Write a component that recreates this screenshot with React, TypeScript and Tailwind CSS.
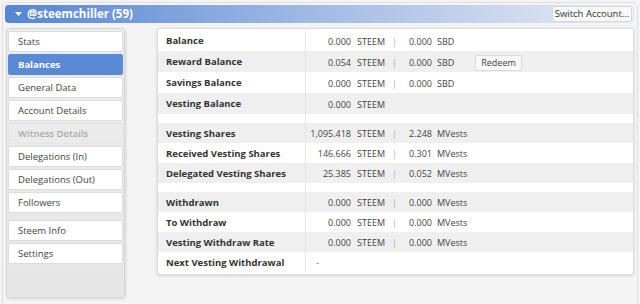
const menu = [
  { label: "Stats" },
  { label: "Balances", active: true },
  { label: "General Data" },
  { label: "Account Details" },
  { label: "Witness Details", disabled: true },
  { label: "Delegations (In)" },
  { label: "Delegations (Out)" },
  { label: "Followers", gapAfter: true },
  { label: "Steem Info" },
  { label: "Settings" },
];

type Row = {
  label: string;
  a?: string;
  au?: string;
  b?: string;
  bu?: string;
  redeem?: boolean;
  dash?: boolean;
};

const groups: { h: string; rows: Row[] }[] = [
  {
    h: "h-[21px]",
    rows: [
      { label: "Balance", a: "0.000", au: "STEEM", b: "0.000", bu: "SBD" },
      { label: "Reward Balance", a: "0.054", au: "STEEM", b: "0.000", bu: "SBD", redeem: true },
      { label: "Savings Balance", a: "0.000", au: "STEEM", b: "0.000", bu: "SBD" },
      { label: "Vesting Balance", a: "0.000", au: "STEEM" },
    ],
  },
  {
    h: "h-[20px]",
    rows: [
      { label: "Vesting Shares", a: "1,095.418", au: "STEEM", b: "2.248", bu: "MVests" },
      { label: "Received Vesting Shares", a: "146.666", au: "STEEM", b: "0.301", bu: "MVests" },
      { label: "Delegated Vesting Shares", a: "25.385", au: "STEEM", b: "0.052", bu: "MVests" },
    ],
  },
  {
    h: "h-[20px]",
    rows: [
      { label: "Withdrawn", a: "0.000", au: "STEEM", b: "0.000", bu: "MVests" },
      { label: "To Withdraw", a: "0.000", au: "STEEM", b: "0.000", bu: "MVests" },
      { label: "Vesting Withdraw Rate", a: "0.000", au: "STEEM", b: "0.000", bu: "MVests" },
      { label: "Next Vesting Withdrawal", dash: true },
    ],
  },
];

function BalanceRow({ row, shaded, h }: { row: Row; shaded: boolean; h: string }) {
  return (
    <div className={`flex ${h} items-center ${shaded ? "bg-[#efefef]" : "bg-white"}`}>
      <div className="flex h-full w-[148px] items-center border-r border-[#e6e6e6] pl-[8px] pt-[2px] text-[9.5px] font-bold text-[#333]">
        {row.label}
      </div>
      {row.dash ? (
        <div className="pl-[10px] pt-[2px] text-[#666]">-</div>
      ) : (
        <div className="flex items-center pt-[2px] text-[#444]">
          <span className="w-[45px] text-right">{row.a}</span>
          <span className="w-[36px] pl-[6px]">{row.au}</span>
          {row.b && (
            <>
              <span className="w-[14px] pl-[5px] text-[#aaa]">|</span>
              <span className="w-[31px] text-right">{row.b}</span>
              <span className="w-[38px] pl-[5px]">{row.bu}</span>
            </>
          )}
          {row.redeem && (
            <button
              type="button"
              className="ml-[5px] h-[16px] w-[47px] rounded-[2px] border border-[#dadada] bg-[#f8f8f8] text-[9px] leading-none text-[#444]"
            >
              Redeem
            </button>
          )}
        </div>
      )}
    </div>
  );
}

export default function App() {
  return (
    <div className="h-[304px] w-[640px] overflow-hidden bg-[#f4f4f4] font-['Open_Sans',sans-serif] text-[9px]">
      <div className="m-[2px] h-[320px] rounded-[6px] border border-[#e0e0e0] bg-[#f4f4f4] px-[2px] pt-[2px]">
        <div className="flex h-[18px] w-[629px] items-center rounded-[4px] bg-gradient-to-r from-[#5585d4] via-[#a3bbe5] to-[#e8ecf5] pr-[2px]">
          <svg width="7" height="4" viewBox="0 0 7 4" className="ml-[10px] mr-[5px]">
            <path d="M0 0h7L3.5 4z" fill="#fff" />
          </svg>
          <span className="text-[11.5px] font-bold text-white">@steemchiller (59)</span>
          <button
            type="button"
            className="ml-auto h-[16px] w-[80px] rounded-[3px] border border-[#d8d8d8] bg-[#f8f8f8] text-[9.5px] leading-none text-[#333]"
          >
            Switch Account...
          </button>
        </div>

        <div className="mt-[5px] flex items-start">
          <div className="ml-px h-[270px] w-[119px] rounded-[3px] border border-[#d6d6d6] bg-gradient-to-b from-[#ececec] to-[#e6e6e6] px-[1px] pt-[2px] shadow-[1px_1px_3px_rgba(0,0,0,0.12)]">
            {menu.map((m) => (
              <div
                key={m.label}
                className={`flex h-[21px] items-center rounded-[2px] border pl-[9px] pt-[2px] text-[9.5px] ${
                  m.gapAfter ? "mb-[7px]" : "mb-[2px]"
                } ${
                  m.active
                    ? "border-[#5a89d5] bg-[#5a89d5] font-bold text-white"
                    : m.disabled
                      ? "border-[#e4e4e4] bg-[#ebebeb] font-semibold text-[#aaa]"
                      : "border-[#dcdcdc] bg-white text-[#444]"
                }`}
              >
                {m.label}
              </div>
            ))}
          </div>

          <div className="ml-[32px] h-[247px] w-[477px] rounded-[3px] border border-[#dcdcdc] bg-white pt-px shadow-[0_1px_3px_rgba(0,0,0,0.15)]">
            {groups.map((g, gi) => (
              <div key={gi}>
                {gi > 0 && (
                  <div className="flex h-[9px]">
                    <div className="w-[148px] border-r border-[#e6e6e6]" />
                  </div>
                )}
                {g.rows.map((r, ri) => (
                  <BalanceRow key={r.label} row={r} h={g.h} shaded={gi === 0 ? ri % 2 === 1 : ri % 2 === 0} />
                ))}
              </div>
            ))}
          </div>
        </div>
      </div>
    </div>
  );
}
